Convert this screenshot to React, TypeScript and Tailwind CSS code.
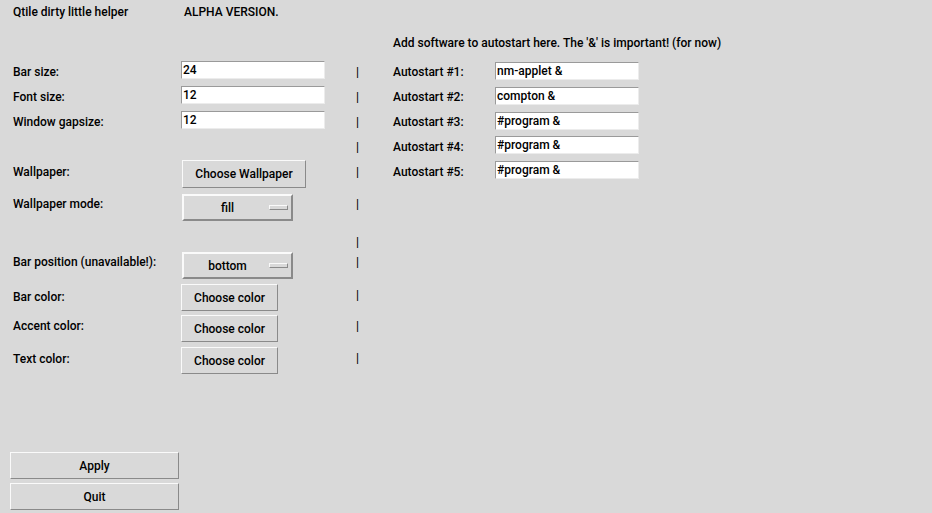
import React from "react";

const F = { fontFamily: "Roboto, 'Liberation Sans', sans-serif" };

function Entry({ value, w, mt }: { value: string; w: string; mt: string }) {
  return (
    <div
      className={`${w} ${mt} h-[18px] bg-white border border-t-[#9a9a9a] border-l-[#9a9a9a] border-b-[#ececec] border-r-[#ececec] pl-[1px] text-[12px] leading-[16px] text-black`}
    >
      {value}
    </div>
  );
}

function Btn({ label, w, mt, h }: { label: string; w: string; mt: string; h: string }) {
  return (
    <div
      className={`${w} ${mt} ${h} flex items-center justify-center bg-[#d9d9d9] border border-t-[#fafafa] border-l-[#fafafa] border-b-[#8a8a8a] border-r-[#8a8a8a] text-[12px] text-black`}
    >
      {label}
    </div>
  );
}

function Menu({ label, mt }: { label: string; mt: string }) {
  return (
    <div
      className={`w-[111px] h-[27px] ${mt} ml-[1px] flex items-center bg-[#d9d9d9] border-2 border-t-[#fafafa] border-l-[#fafafa] border-b-[#8a8a8a] border-r-[#8a8a8a] text-[12px] text-black`}
    >
      <div className="flex-1 text-center pl-[2px]">{label}</div>
      <div className="w-[19px] h-[5px] mr-[3px] bg-[#d9d9d9] border border-t-[#fafafa] border-l-[#fafafa] border-b-[#8a8a8a] border-r-[#8a8a8a]" />
    </div>
  );
}

function Pipe({ pt }: { pt: string }) {
  return <div className={`w-[37px] ${pt} text-[12px] leading-[15px] text-black`}>|</div>;
}

function Label({ text, pt }: { text: string; pt: string }) {
  return <div className={`w-[181px] pl-[13px] ${pt} text-[12px] leading-[15px]`}>{text}</div>;
}

function RLabel({ text, pt }: { text: string; pt: string }) {
  return <div className={`w-[102px] ${pt} text-[12px] leading-[15px]`}>{text}</div>;
}

export default function App() {
  return (
    <div
      style={F}
      className="w-[932px] h-[513px] bg-[#d9d9d9] text-black font-medium flex flex-col overflow-hidden"
    >
      {/* title row */}
      <div className="h-[30px] flex text-[12px] leading-[15px] pt-[5px]">
        <div className="w-[184px] pl-[13px]">Qtile dirty little helper</div>
        <div>ALPHA VERSION.</div>
      </div>
      {/* autostart note */}
      <div className="h-[30px] flex text-[12px] leading-[15px] pt-[6px] pl-[393px]">
        Add software to autostart here. The '&amp;' is important! (for now)
      </div>
      {/* entries */}
      {[
        ["Bar size:", "24", "nm-applet &", "Autostart #1:"],
        ["Font size:", "12", "compton &", "Autostart #2:"],
        ["Window gapsize:", "12", "#program &", "Autostart #3:"],
      ].map(([l, v, rv, rl]) => (
        <div key={l} className="h-[25px] flex">
          <Label text={l} pt="pt-[5px]" />
          <div className="w-[175px]">
            <Entry value={v} w="w-[144px]" mt="mt-[1px]" />
          </div>
          <Pipe pt="pt-[5px]" />
          <RLabel text={rl} pt="pt-[5px]" />
          <Entry value={rv} w="w-[144px]" mt="mt-[2px]" />
        </div>
      ))}
      {/* row 5 */}
      <div className="h-[24px] flex">
        <Label text="" pt="pt-[5px]" />
        <div className="w-[175px]" />
        <Pipe pt="pt-[5px]" />
        <RLabel text="Autostart #4:" pt="pt-[5px]" />
        <Entry value="#program &" w="w-[144px]" mt="mt-[1px]" />
      </div>
      {/* wallpaper */}
      <div className="h-[33px] flex">
        <Label text="Wallpaper:" pt="pt-[6px]" />
        <div className="w-[175px] pl-[1px]">
          <Btn label="Choose Wallpaper" w="w-[124px]" mt="mt-[1px]" h="h-[28px]" />
        </div>
        <Pipe pt="pt-[6px]" />
        <RLabel text="Autostart #5:" pt="pt-[6px]" />
        <Entry value="#program &" w="w-[144px]" mt="mt-[2px]" />
      </div>
      {/* wallpaper mode */}
      <div className="h-[36px] flex">
        <Label text="Wallpaper mode:" pt="pt-[5px]" />
        <div className="w-[175px]">
          <Menu label="fill" mt="mt-[2px]" />
        </div>
        <Pipe pt="pt-[5px]" />
      </div>
      {/* empty */}
      <div className="h-[22px] flex">
        <Label text="" pt="pt-[4px]" />
        <div className="w-[175px]" />
        <Pipe pt="pt-[7px]" />
      </div>
      {/* bar position */}
      <div className="h-[33px] flex">
        <Label text="Bar position (unavailable!):" pt="pt-[5px]" />
        <div className="w-[175px]">
          <Menu label="bottom" mt="mt-[2px]" />
        </div>
        <Pipe pt="pt-[5px]" />
      </div>
      {[
        ["Bar color:", "h-[31px]", "pt-[7px]"],
        ["Accent color:", "h-[32px]", "pt-[5px]"],
        ["Text color:", "h-[30px]", "pt-[6px]"],
      ].map(([l, h, pt]) => (
        <div key={l} className={`${h} flex`}>
          <Label text={l} pt={pt} />
          <div className="w-[175px]">
            <Btn label="Choose color" w="w-[97px]" mt="mt-[1px]" h="h-[27px]" />
          </div>
          <Pipe pt="pt-[5px]" />
        </div>
      ))}
      <div className="h-[76px]" />
      <div className="pl-[10px] flex flex-col gap-[4px]">
        <Btn label="Apply" w="w-[169px]" mt="mt-0" h="h-[27px]" />
        <Btn label="Quit" w="w-[169px]" mt="mt-0" h="h-[27px]" />
      </div>
    </div>
  );
}
